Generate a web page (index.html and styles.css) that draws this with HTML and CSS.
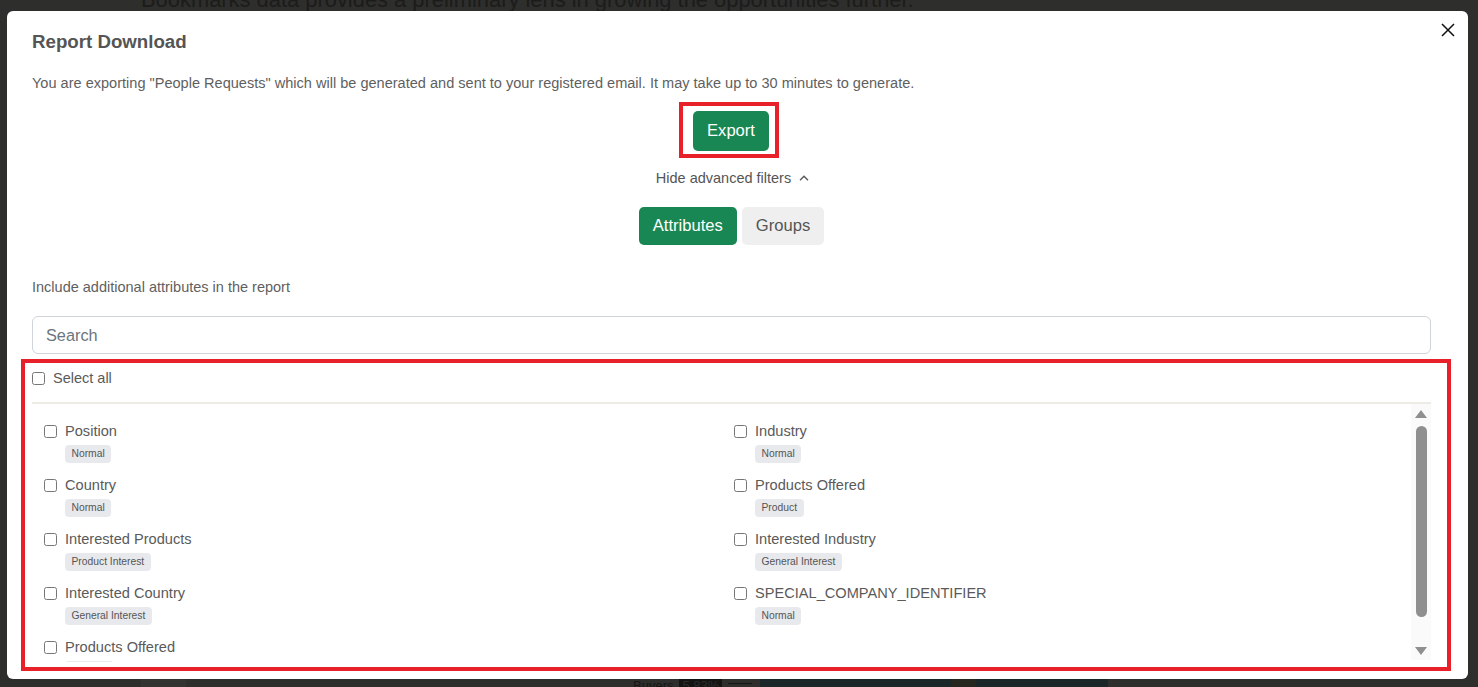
FILE: index.html
```html
<!DOCTYPE html>
<html lang="en">
<head>
  <meta charset="UTF-8">
  <meta name="viewport" content="width=device-width, initial-scale=1.0">
  <title>Report Download</title>
  <link rel="stylesheet" href="styles.css">
</head>
<body>
  <div class="page">
    <p class="page-lead">Bookmarks data provides a preliminary lens in growing the opportunities further.</p>
    <div class="page-foot">
      <span class="foot-side"></span>
      <span class="foot-label">Buyers</span>
      <span class="foot-chip">5.83%</span>
      <span class="foot-line"></span>
      <span class="foot-chart"></span>
    </div>
  </div>

  <div class="modal">
    <button class="close" aria-label="Close">
      <svg width="14" height="14" viewBox="0 0 14 14"><path d="M1 1 L13 13 M13 1 L1 13" stroke="#111" stroke-width="1.5" fill="none"/></svg>
    </button>

    <h2 class="title">Report Download</h2>
    <p class="desc">You are exporting "People Requests" which will be generated and sent to your registered email. It may take up to 30 minutes to generate.</p>

    <div class="center">
      <div class="mark export-mark">
        <button class="btn btn-green btn-export">Export</button>
      </div>
    </div>

    <div class="center">
      <span class="toggle">Hide advanced filters
        <svg width="10" height="6" viewBox="0 0 10 6"><path d="M1 5.2 L5 1.2 L9 5.2" stroke="#555" stroke-width="1.3" fill="none"/></svg>
      </span>
    </div>

    <div class="center tabs">
      <button class="btn btn-green">Attributes</button>
      <button class="btn btn-grey">Groups</button>
    </div>

    <p class="hint">Include additional attributes in the report</p>

    <input class="search" type="text" placeholder="Search">

    <div class="mark list-mark">
      <label class="select-all"><input type="checkbox"> Select all</label>
      <hr class="sep">
      <div class="list-wrap">
        <div class="list" id="list"></div>
        <div class="scrollbar">
          <span class="arrow up"></span>
          <span class="thumb"></span>
          <span class="arrow down"></span>
        </div>
      </div>
    </div>
  </div>

  <script>
    const attrs = [
      ['Position', 'Normal'],
      ['Industry', 'Normal'],
      ['Country', 'Normal'],
      ['Products Offered', 'Product'],
      ['Interested Products', 'Product Interest'],
      ['Interested Industry', 'General Interest'],
      ['Interested Country', 'General Interest'],
      ['SPECIAL_COMPANY_IDENTIFIER', 'Normal'],
      ['Products Offered', 'Product']
    ];
    const list = document.getElementById('list');
    attrs.forEach(([name, tag]) => {
      const item = document.createElement('div');
      item.className = 'item';
      item.innerHTML = `
        <label class="item-name"><input type="checkbox"> ${name}</label>
        <span class="badge">${tag}</span>
      `;
      list.appendChild(item);
    });
  </script>
</body>
</html>
```

FILE: styles.css
```css
/* report download modal */
body {
  margin: 0;
  background: #2e2e2c;
  font-family: "Liberation Sans", Arial, sans-serif;
  color: #5a5a5a;
  overflow: hidden;
}

.page {
  height: 687px;
  display: flex;
  flex-direction: column;
  justify-content: space-between;
}

.page-lead {
  margin: -12px 0 0 141px;
  font-size: 21.9px;
  line-height: 24px;
  color: #1c1c1b;
}

.page-foot {
  display: flex;
  align-items: center;
  height: 8px;
  gap: 6px;
  font-size: 13px;
  color: #161616;
}

.foot-side {
  width: 45px;
  height: 8px;
  margin-left: 141px;
  margin-right: 441px;
  background: #333331;
}

.foot-label { line-height: 8px; padding-top: 6px; }

.foot-chip {
  background: #141414;
  color: #2c2c2c;
  padding: 6px 3px 0;
  line-height: 8px;
}

.foot-line {
  width: 24px;
  height: 1px;
  background: #161616;
}

.foot-chart {
  width: 348px;
  height: 8px;
  margin-left: 2px;
  background: linear-gradient(100deg, #1b2629 0 55%, #26271e 55% 62%, #1b2629 62%);
}

.modal {
  position: fixed;
  top: 11px;
  left: 7px;
  width: 1461px;
  height: 668px;
  box-sizing: border-box;
  padding: 20px 37px 0 25px;
  background: #fff;
  border-radius: 6px;
  overflow: hidden;
}

.close {
  position: absolute;
  top: 12px;
  right: 13px;
  border: 0;
  background: none;
  padding: 0;
  line-height: 0;
}

.title {
  margin: 0;
  font-size: 18.7px;
  line-height: 22px;
  font-weight: 700;
  color: #555;
}

.desc {
  margin: 20px 0 0;
  font-size: 14.55px;
  line-height: 20px;
  color: #5f5f5f;
}

.center {
  display: flex;
  justify-content: center;
}

.mark {
  border: 4px solid #e8202a;
}

.export-mark {
  margin: 9px 0 0 -5px;
  padding: 5px 6px 3px 10px;
}

.btn {
  font-family: inherit;
  font-size: 16.6px;
  line-height: 20px;
  border: 0;
  border-radius: 5px;
  cursor: pointer;
}

.btn-green {
  background: #198754;
  color: #fff;
}

.btn-grey {
  background: #efefef;
  color: #555;
}

.btn-export {
  padding: 10px 14px;
}

.toggle {
  margin: 10px 0 0 2px;
  font-size: 14.5px;
  line-height: 20px;
  color: #555;
  display: flex;
  align-items: center;
  gap: 8px;
}

.tabs {
  margin-top: 19px;
  gap: 5px;
}

.tabs .btn {
  padding: 9px 14px;
}

.hint {
  margin: 32px 0 0;
  font-size: 14.5px;
  line-height: 20px;
  color: #5f5f5f;
}

.search {
  display: block;
  width: 100%;
  height: 38px;
  box-sizing: border-box;
  margin-top: 19px;
  padding: 0 13px;
  border: 1px solid #ced4da;
  border-radius: 6px;
  font-family: inherit;
  font-size: 16.3px;
  color: #555;
}

.search::placeholder { color: #6c757d; }

.list-mark {
  margin: 5px -20px 0 -11px;
  padding: 5px 16px 0 7px;
  height: 299px;
}

.select-all {
  display: flex;
  align-items: center;
  gap: 8px;
  font-size: 14.5px;
  line-height: 20px;
  color: #5a5a5a;
}

input[type="checkbox"] {
  margin: 0;
  width: 13px;
  height: 13px;
}

.sep {
  margin: 14px 0 0;
  border: 0;
  height: 2px;
  background: #ecebe6;
}

.list-wrap {
  display: flex;
  height: 258px;
  overflow: hidden;
}

.list {
  flex: 1;
  display: grid;
  grid-template-columns: 690px 1fr;
  row-gap: 12px;
  align-content: start;
  padding: 17px 0 0 12px;
}

.item {
  display: flex;
  flex-direction: column;
  align-items: flex-start;
  gap: 4px;
}

.item-name {
  display: flex;
  align-items: center;
  gap: 8px;
  font-size: 14.6px;
  line-height: 20px;
  color: #5a5a5a;
}

.badge {
  margin-left: 21px;
  height: 18px;
  line-height: 18px;
  padding: 0 6.5px;
  border-radius: 4px;
  background: #e8e9ec;
  font-size: 10.3px;
  color: #555;
}

.scrollbar {
  width: 20px;
  height: 256px;
  background: #fafafa;
  display: flex;
  flex-direction: column;
  align-items: center;
  padding-top: 6px;
  box-sizing: border-box;
}

.arrow {
  width: 0;
  height: 0;
  border-left: 6px solid transparent;
  border-right: 6px solid transparent;
}

.arrow.up { border-bottom: 8px solid #8f8f8f; }

.arrow.down {
  border-top: 8px solid #8f8f8f;
  margin-top: 30px;
}

.thumb {
  margin-top: 8px;
  width: 11px;
  height: 191px;
  border-radius: 6px;
  background: #8f8f8f;
}
```
